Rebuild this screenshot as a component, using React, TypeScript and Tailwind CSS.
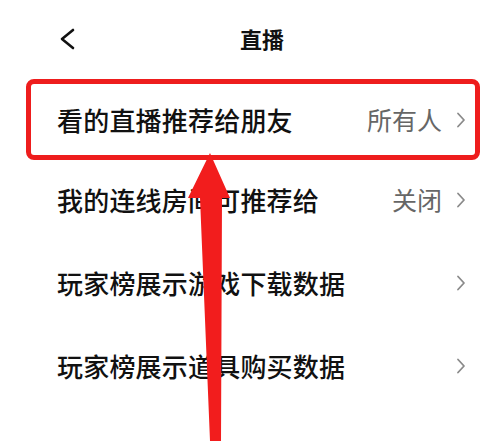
import React from "react";

const font = { fontFamily: '"Noto Sans CJK SC", "Noto Sans", sans-serif' };

function ChevronRight() {
  return (
    <svg width="10" height="16" viewBox="0 0 10 16" className="shrink-0">
      <path d="M2 1.5 L8 8 L2 14.5" fill="none" stroke="#8a8a8a" strokeWidth="1.8" strokeLinecap="round" strokeLinejoin="round" />
    </svg>
  );
}

function Row({ label, value }: { label: string; value?: string }) {
  return (
    <div className="h-[83px] flex items-center pl-[57px] pr-[34px]">
      <span className="text-[26px] font-medium text-[#111] tracking-[0.2px]">{label}</span>
      <span className="ml-auto text-[25px] text-[#666]">{value}</span>
      <span className="ml-[14px]">
        <ChevronRight />
      </span>
    </div>
  );
}

export default function App() {
  return (
    <div className="relative w-[500px] h-[441px] bg-white overflow-hidden" style={font}>
      {/* Header */}
      <div className="h-[79px] flex items-center pl-[58px] pb-[2px]">
        <svg width="18" height="22" viewBox="0 0 18 22">
          <path d="M15 2 L4 11 L15 20" fill="none" stroke="#111" strokeWidth="2.6" strokeLinecap="round" strokeLinejoin="round" />
        </svg>
        <span className="ml-[164px] text-[22px] font-bold text-[#111]">直播</span>
      </div>

      {/* Highlighted row */}
      <div className="mx-[26px] w-[454px] h-[81px] border-[5px] border-[#ee1d1d] rounded-[8px] flex items-center pl-[26px] pr-[9px]">
        <span className="text-[26px] font-medium text-[#111] tracking-[0.2px]">看的直播推荐给朋友</span>
        <span className="ml-auto text-[25px] text-[#666]">所有人</span>
        <span className="ml-[14px]">
          <ChevronRight />
        </span>
      </div>

      <div className="-mt-[2px]">
        <Row label="我的连线房间可推荐给" value="关闭" />
        <Row label="玩家榜展示游戏下载数据" />
        <Row label="玩家榜展示道具购买数据" />
      </div>

      {/* Arrow overlay */}
      <svg className="absolute inset-0 pointer-events-none" width="500" height="441" viewBox="0 0 500 441">
        <polygon points="210,153 230,198 222,198 221,441 210,441 200,198 188,198" fill="#f21d1d" />
      </svg>
    </div>
  );
}
